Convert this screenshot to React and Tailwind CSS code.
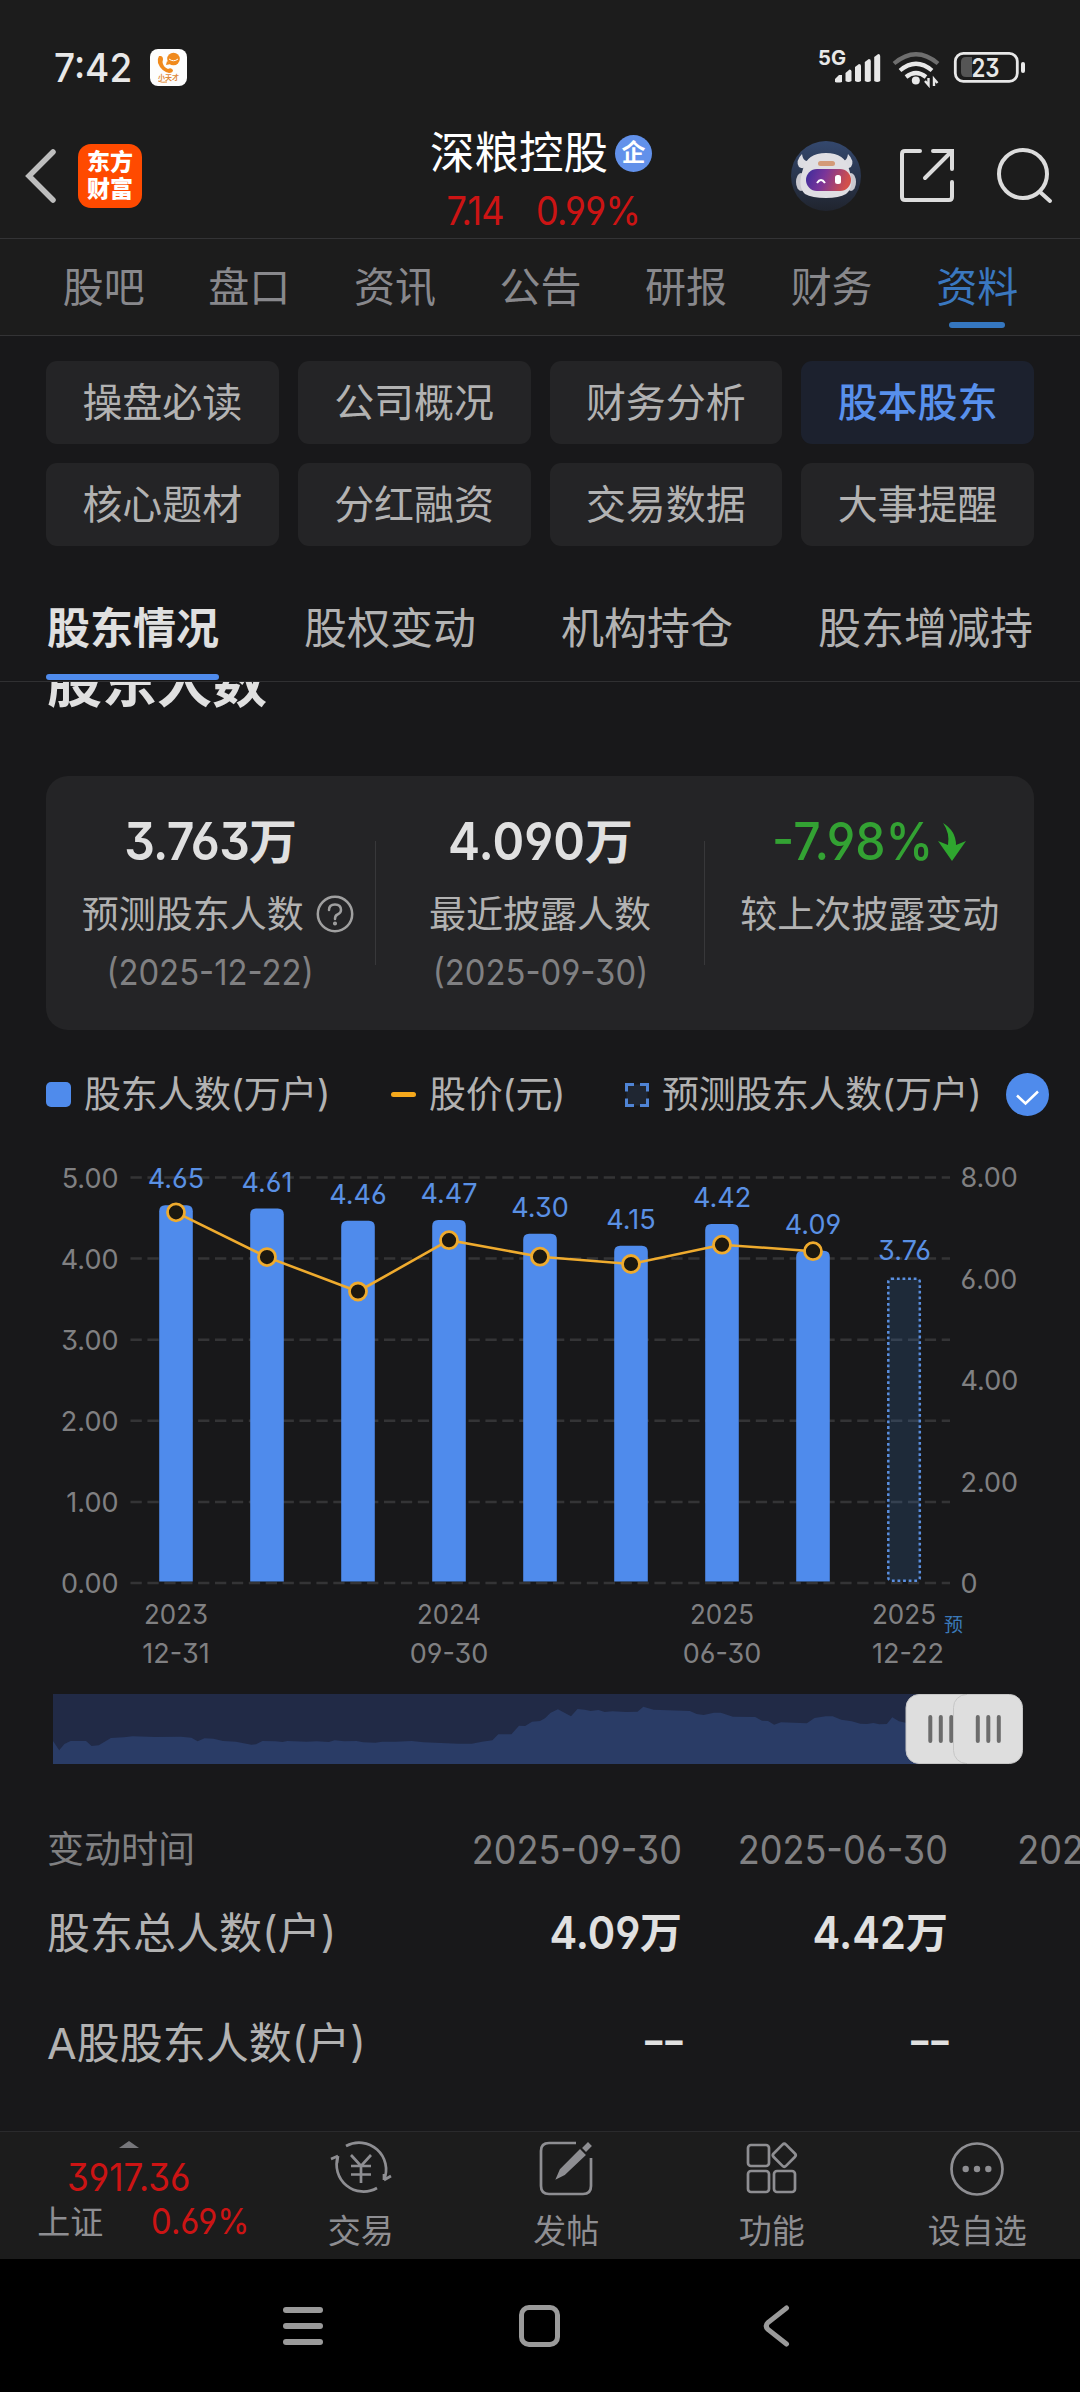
import React from 'react';
import clsx from 'clsx';

const tabs = ['股吧', '盘口', '资讯', '公告', '研报', '财务', '资料'];

const chips = ['操盘必读', '公司概况', '财务分析', '股本股东', '核心题材', '分红融资', '交易数据', '大事提醒'];

const subTabs = ['股东情况', '股权变动', '机构持仓', '股东增减持'];

const holders = [
  { value: 4.65, price: 1212.3, date: ['2023', '12-31'] },
  { value: 4.61, price: 1257.1 },
  { value: 4.46, price: 1291.5 },
  { value: 4.47, price: 1240.2, date: ['2024', '09-30'] },
  { value: 4.3, price: 1256.7 },
  { value: 4.15, price: 1264 },
  { value: 4.42, price: 1244.7, date: ['2025', '06-30'] },
  { value: 4.09, price: 1251.2 },
];

// Condensed digits, the box keeps its natural width
const Num = ({ className, children }) => (
  <span className={clsx('inline-block scale-x-[.925] whitespace-nowrap', className)}>{children}</span>
);

const StatusBar = () => (
  <div className="flex h-[135px] items-center pl-[54px] pr-[54px] text-[#e8e8e8]">
    <Num className="w-[96px] origin-left text-[40px] font-medium leading-none">7:42</Num>
    <svg width="37" height="37" viewBox="0 0 37 37">
      <rect width="37" height="37" rx="8" fill="#fdfdfd" />
      <path d="M9 7 Q7 10 8 14 Q11 22 19 24 Q23 24 23 21 Q21 18 18 20 Q13 18 12.500 13 Q14 8 11 7 Z" fill="#f08a1d" />
      <circle cx="23.500" cy="10" r="6.300" fill="#f08a1d" />
      <path d="M17 12 l-1 4 5 -1 Z" fill="#f08a1d" />
      <path d="M19 10 q4.500 3.500 9 0" fill="none" stroke="#fff" />
      <text x="18.500" y="31" fontSize="7" fontWeight="700" fill="#e08a3a" textAnchor="middle">小天才</text>
      <path d="M8 32 q4 2 9 1" fill="none" stroke="#e08a3a" />
    </svg>
    <svg className="ml-auto" width="210" height="40" viewBox="816 48 210 40">
      <text x="818" y="65" fontSize="20" fontWeight="700" fill="#e8e8e8" textLength="28" lengthAdjust="spacingAndGlyphs">5G</text>
      <g fill="#e8e8e8">
        <path d="M835 79 l4 -4 h3 v7 q-4 1 -7 0 Z" />
        <path d="M845.500 73 l4 -3.500 q2 0 2 2 V81 q-3 2 -6 0 Z" />
        <path d="M855 67 l4 -3 q2 0 2 2 V81 q-3 2 -6 0 Z" />
        <path d="M864.800 62 l4 -3 q2 0 2 2 V81 q-3 2 -6 0 Z" />
        <path d="M874.200 57 l4 -3 q2 0 2 2 V81 q-3 2 -6 0 Z" />
      </g>
      <g fill="none" strokeWidth="4.200">
        <path d="M894 63.500 Q916 45 938 63.500" stroke="#6e6e6e" />
        <path d="M900 70.500 Q916 57 932 70.500" stroke="#e8e8e8" />
        <path d="M906 77 Q916 69 926 77" stroke="#e8e8e8" />
      </g>
      <circle cx="915.800" cy="80.500" r="4" fill="#e8e8e8" />
      <path d="M925 81 l3.500 4 v-7 M934 86 v-7 l3.500 4" fill="none" stroke="#e8e8e8" strokeWidth="2.400" />
      <rect x="955.300" y="53.300" width="62" height="28" rx="8" fill="none" stroke="#e8e8e8" strokeWidth="2.800" />
      <path d="M972 57 h-6 q-5 0 -5 5 v10 q0 5 5 5 h6 Z" fill="#555" />
      <rect x="1021" y="62" width="4" height="11" rx="2" fill="#e8e8e8" />
      <text x="985.500" y="76.800" fontSize="26" fontWeight="600" fill="#e8e8e8" textAnchor="middle" textLength="28" lengthAdjust="spacingAndGlyphs">23</text>
    </svg>
  </div>
);

const Robot = () => (
  <svg width="70" height="70" viewBox="0 0 70 70">
    <defs>
      <linearGradient id="halo" x1="0" y1="0" x2="0" y2="1">
        <stop offset="0" stopColor="#34486e" />
        <stop offset="1" stopColor="#20242e" />
      </linearGradient>
      <linearGradient id="visor" x1="0" y1="0" x2="1" y2="0.200">
        <stop offset="0" stopColor="#3a2c9c" />
        <stop offset="0.450" stopColor="#7a3599" />
        <stop offset="1" stopColor="#d2504a" />
      </linearGradient>
    </defs>
    <circle cx="35" cy="35" r="35" fill="url(#halo)" />
    <path d="M11 13 Q4 20 8 26 Q12 29 18 24 L16 20 Q12 20 11 13 Z M57 13 Q64 20 60 26 Q56 29 50 24 L52 20 Q56 20 57 13 Z" fill="#dcdce2" />
    <ellipse cx="10" cy="41" rx="5" ry="9" fill="#c9c8cf" />
    <ellipse cx="60" cy="41" rx="5" ry="9" fill="#c9c8cf" />
    <path d="M35 12 Q54 12 58 28 Q64 46 55 53 Q48 57 35 57 Q21 57 14 53 Q6 46 12 28 Q16 12 35 12 Z" fill="#dfdee3" />
    <rect x="27" y="20" width="17" height="5" rx="2.500" fill="#d39a78" />
    <rect x="15" y="28" width="45" height="22" rx="11" fill="url(#visor)" />
    <path d="M26 42 Q30 36 34 42" fill="none" stroke="#fff" strokeWidth="2" />
    <rect x="44" y="34" width="6" height="9" rx="2.500" fill="#fff" />
  </svg>
);

const Header = () => (
  <div className="grid h-[104px] grid-cols-[1fr_auto_1fr] border-b border-[#333335]">
    <div className="flex h-[81px] items-center pl-[24px]">
      <svg width="32" height="54" viewBox="0 0 32 54" fill="none" stroke="#bdbdbd" strokeWidth="5.500">
        <path d="M29 3 L5 27 L29 51" strokeLinecap="round" />
      </svg>
      <div className="ml-[22px] flex h-[64px] w-[64px] flex-col items-center justify-center rounded-[13px] bg-[#ff4a00] text-[23px] font-black leading-[27px] text-white">
        <span>东方</span>
        <span>财富</span>
      </div>
    </div>
    <div className="flex flex-col items-center">
      <div className="flex h-[36px] items-center gap-[7px] pl-[2px]">
        <span className="text-[44.500px] leading-none text-white">深粮控股</span>
        <span className="flex h-[37px] w-[37px] items-center justify-center rounded-full bg-[#6291ea] text-[24px] font-bold leading-none text-white">企</span>
      </div>
      <div className="mt-[14px] flex h-[50px] items-center gap-[33px] pl-[11px] text-[39px] leading-none text-[#cc1414]">
        <Num className="origin-right tracking-[-0.030em]">7.14</Num>
        <Num className="origin-left tracking-[-0.020em]">0.99%</Num>
      </div>
    </div>
    <div className="flex h-[81px] items-center justify-end pr-[27px]">
      <Robot />
      <svg className="ml-[38px]" width="56" height="56" viewBox="0 0 56 56" fill="none" stroke="#dcdcdc" strokeWidth="4" strokeLinecap="round">
        <path d="M21 3 H6 Q3 3 3 6 V49 Q3 52 6 52 H50 Q53 52 53 49 V34 M34 3 H53 V21 M52 4 L26 30" />
      </svg>
      <svg className="ml-[40px]" width="58" height="58" viewBox="0 0 58 58" fill="none" stroke="#dcdcdc" strokeWidth="4" strokeLinecap="round">
        <circle cx="28" cy="27" r="24" />
        <path d="M45 45 L55 54" />
      </svg>
    </div>
  </div>
);

const Tabs = () => (
  <div className="grid h-[97px] grid-cols-7 border-b border-[#333335] pl-[31px] pr-[30px]">
    {tabs.map((tab) => {
      const active = tab === '资料';
      return (
        <div key={tab} className="flex flex-col items-center">
          <span className={clsx('mt-[27px] text-[41px] leading-[42px]', active ? 'text-[#3a78c0]' : 'text-[#88888c]')}>{tab}</span>
          {active && <span className="mt-[14px] h-[6px] w-[56px] rounded-full bg-[#3577c0]" />}
        </div>
      );
    })}
  </div>
);

const Chips = () => (
  <div className="mt-[25px] grid grid-cols-4 gap-[19px] px-[46px]">
    {chips.map((chip) => (
      <div
        key={chip}
        className={clsx(
          'flex h-[83px] items-center justify-center rounded-[11px] text-[40px] leading-none',
          chip === '股本股东' ? 'bg-[#1c212e] font-medium text-[#5890ec]' : 'bg-[#242426] text-[#b2b2b2]'
        )}
      >
        {chip}
      </div>
    ))}
  </div>
);

const SubTabs = () => (
  <div className="mt-[59px] flex h-[77px] gap-[84px] border-b border-[#303032] px-[46px]">
    {subTabs.map((tab, i) => (
      <div key={tab} className="flex flex-col">
        <span className={clsx('pl-[1px] text-[43px] leading-[46px]', i === 0 ? 'font-semibold text-[#e0e0e0]' : 'text-[#b2b2b2]')}>{tab}</span>
        {i === 0 && <span className="mt-[23px] h-[6px] rounded-full bg-[#4f8bec]" />}
      </div>
    ))}
  </div>
);

const Stats = () => (
  <div className="mx-[46px] flex h-[254px] rounded-[22px] bg-[#242426]">
    <div className="flex flex-1 flex-col items-center pt-[36px]">
      <div className="flex h-[60px] items-center text-[48px] font-semibold leading-none text-[#e0e0e0]">
        <Num className="-ml-[10px] origin-right text-[52px] tracking-[-0.015em]">3.763</Num>万
      </div>
      <div className="ml-[15px] mt-[17px] flex h-[50px] items-center gap-[12px] text-[37px] leading-none text-[#b2b2b2]">
        预测股东人数
        <svg width="38" height="38" viewBox="0 0 38 38" fill="none" stroke="#a0a0a0" strokeWidth="2.500">
          <circle cx="19" cy="19" r="17.200" />
          <path d="M13 15 Q13 9.500 19 9.500 Q25 9.500 25 15 Q25 18 21.500 19.500 Q19 20.500 19 24" strokeLinecap="round" />
          <circle cx="19" cy="28.500" r="0.800" fill="#a0a0a0" />
        </svg>
      </div>
      <Num className="mt-[9px] text-[35.500px] leading-[50px] text-[#808082]">(2025-12-22)</Num>
    </div>
    <div className="mt-[65px] h-[124px] w-px bg-[#38383a]" />
    <div className="flex flex-1 flex-col items-center pt-[36px]">
      <div className="flex h-[60px] items-center text-[48px] font-semibold leading-none text-[#e0e0e0]">
        <Num className="-ml-[10px] origin-right text-[52px]">4.090</Num>万
      </div>
      <div className="mt-[17px] flex h-[50px] items-center text-[37px] leading-none text-[#b2b2b2]">最近披露人数</div>
      <Num className="mt-[9px] text-[35.500px] leading-[50px] text-[#808082]">(2025-09-30)</Num>
    </div>
    <div className="mt-[65px] h-[124px] w-px bg-[#38383a]" />
    <div className="flex flex-1 flex-col items-center pt-[36px]">
      <div className="flex h-[60px] items-center text-[#33a233]">
        <Num className="-ml-[14px] origin-right text-[52px] font-medium leading-none">-7.98%</Num>
        <svg className="ml-[5px]" width="28" height="38" viewBox="0 0 28 38">
          <path d="M5 0 Q18 8 18 22 L28 18 L14 38 L0 18 L10 22 Q12 10 5 0 Z" fill="#2fa62f" />
        </svg>
      </div>
      <div className="mt-[17px] flex h-[50px] items-center text-[37px] leading-none text-[#b2b2b2]">较上次披露变动</div>
    </div>
  </div>
);

const Legend = () => (
  <div className="mt-[43px] flex h-[43px] items-center pl-[46px] text-[37px] leading-none tracking-[-0.010em] text-[#b2b2b2]">
    <div className="flex w-[345px] items-center gap-[13px]">
      <span className="h-[25px] w-[25px] rounded-[5px] bg-[#4f8bec]" />
      <span>股东人数(万户)</span>
    </div>
    <div className="flex w-[234px] items-center gap-[13px]">
      <span className="h-[5px] w-[25px] rounded-full bg-[#f5a81c]" />
      <span>股价(元)</span>
    </div>
    <div className="flex w-[381px] items-center gap-[13px]">
      <svg width="24" height="24" viewBox="0 0 24 24">
        <rect x="1.500" y="1.500" width="21" height="21" fill="#1f2632" />
        <path d="M1.500 8.500 V1.500 H9 M15 1.500 H22.500 V8.500 M22.500 15.500 V22.500 H15 M9 22.500 H1.500 V15.500" fill="none" stroke="#4f84d6" strokeWidth="3" />
      </svg>
      <span>预测股东人数(万户)</span>
    </div>
    <svg width="43" height="43" viewBox="0 0 43 43">
      <circle cx="21.500" cy="21.500" r="21.500" fill="#4f8bec" />
      <path d="M11 22.500 L19.500 30.500 L32 18.500" fill="none" stroke="#fff" strokeWidth="2.500" />
    </svg>
  </div>
);

const barX = (i) => 176 + i * 91;
const barTop = (value) => 1582 - value * 81;

const Chart = () => (
  <svg className="block" width="1080" height="556" viewBox="0 1116 1080 556" fontSize="27">
    {[5, 4, 3, 2, 1, 0].map((n) => (
      <g key={n}>
        <path d={`M130.500 ${1583 - n * 81.100} H950`} stroke="#343436" strokeWidth="2.500" strokeDasharray="11.300 5.600" />
        <text x="118.500" y={1593 - n * 81.100} fill="#808082" textAnchor="end">{n.toFixed(2)}</text>
      </g>
    ))}
    {['0', '2.00', '4.00', '6.00', '8.00'].map((label, n) => (
      <text key={label} x="960.500" y={1593 - n * 101.400} fill="#808082">{label}</text>
    ))}
    {holders.map(({ value }, i) => {
      const x = barX(i) - 16.8;
      const top = barTop(value);
      return (
        <g key={i}>
          <path d={`M${x} 1581.500 V${top + 6} q0 -6 6 -6 h21.600 q6 0 6 6 V1581.500 Z`} fill="#4f8bec" />
          <text x={barX(i)} y={top - 17} fill="#5a90e4" textAnchor="middle">{value.toFixed(2)}</text>
        </g>
      );
    })}
    <rect x="888.300" y="1278.700" width="31.500" height="302" rx="3" fill="#3f8be0" fillOpacity="0.160" />
    <rect x="888.300" y="1278.700" width="31.500" height="302" rx="3" fill="none" stroke="#5a8fe0" strokeWidth="2.500" strokeDasharray="2.800 2.800" />
    <text x="904.500" y="1260" fill="#5a90e4" textAnchor="middle">3.76</text>
    <polyline
      points={holders.map(({ price }, i) => `${barX(i)},${price}`).join(' ')}
      fill="none"
      stroke="#efab2e"
      strokeWidth="2.600"
    />
    {holders.map(({ price }, i) => (
      <circle key={i} cx={barX(i)} cy={price} r="8.500" fill="#1c1810" stroke="#efab2e" strokeWidth="2.800" />
    ))}
    <g fill="#808082" textAnchor="middle">
      {holders.map(({ date }, i) => date && (
        <g key={i}>
          <text x={barX(i)} y="1624" textLength="64" lengthAdjust="spacingAndGlyphs">{date[0]}</text>
          <text x={barX(i)} y="1663">{date[1]}</text>
        </g>
      ))}
      <text x="904" y="1624" textLength="64" lengthAdjust="spacingAndGlyphs">2025</text>
      <text x="908" y="1663">12-22</text>
    </g>
    <text x="944" y="1631.500" fontSize="19" fill="#3a78b8">预</text>
  </svg>
);

const RangeSlider = () => (
  <svg className="ml-[53px] mt-[22px] block" width="970" height="70" viewBox="0 0 970 70">
    <rect width="880" height="70" fill="#212a46" />
    <path
      d="M0 70 V47 L6.200 56.300 L11.400 50 L17.600 47 H33 L38.600 52 L45.800 51.300 L57.900 44 L71 43.300 L79.600 42.300 L102 43 L127.800 42.700 L138.400 43.700 L144.600 47.300 L151.500 44.300 L160.500 44.700 L170 47 L182.900 47.700 L198.400 50.700 L203 50.300 L209.400 47 L222.500 47.300 L229.400 48 L234.500 47 L253.500 47.700 L263.800 47.300 L275.900 48 L281.700 46.300 L291.400 47.300 L303.400 47 L310.300 48.300 L322.300 48.700 L329.200 47.700 H343 L358.500 47 L370.600 48.300 L405 49.700 L418.800 49.700 L429 47.700 L439.400 46.300 L445.300 40.300 H458.400 L466 31.700 L472.200 32 L479 27.700 L487 27 L492 24.300 L497.300 19 L504.900 15.300 L518 22.300 L524.500 15 L531.800 15.700 L537.600 17 L545.500 16 L551.700 18 L559.300 17.300 L573 18 L584.500 17.700 L590.300 12.700 L600.600 15.700 L636.800 17 L643.700 20 L650.600 21 L661 18.700 H667.800 L679.900 22.700 L702.200 23 L709 26.700 L715 27 L721.200 30.700 L728 28.300 L753.900 29.300 L761.500 24 L772.800 22.300 H779.700 L788.300 25.700 L798.700 27.300 L807.300 29.700 L814 30 L820.400 29 L826.200 30.300 L833.800 30 L839.300 23.300 L845.900 27.300 L852.700 28.700 H880 V70 Z"
      fill="#2a3c66"
    />
    {[853, 900.5].map((x) => (
      <g key={x}>
        <rect x={x} y="0.500" width="69" height="69" rx="13" fill="#dedede" stroke="#c6c6c6" />
        <path d={`M${x + 24.3} 23 v24 M${x + 34.8} 23 v24 M${x + 45.3} 23 v24`} stroke="#6c6c6c" strokeWidth="4" strokeLinecap="round" />
      </g>
    ))}
  </svg>
);

const Table = () => (
  <div className="grid w-[1221px] grid-cols-[369px_266px_266px_273px] pl-[47px] pt-[57px]">
    <span className="h-[58px] text-[37px] leading-[58px] text-[#808082]">变动时间</span>
    <Num className="origin-right text-right text-[39px] leading-[58px] text-[#808082]">2025-09-30</Num>
    <Num className="origin-right text-right text-[39px] leading-[58px] text-[#808082]">2025-06-30</Num>
    <Num className="origin-right text-right text-[39px] leading-[58px] text-[#808082]">2025-03-31</Num>

    <span className="mt-[24px] text-[43px] leading-[60px] text-[#b2b2b2]">股东总人数(户)</span>
    <div className="mt-[24px] flex items-center justify-end text-[42px] font-semibold leading-[60px] text-[#e0e0e0]">
      <Num className="origin-right text-[45px]">4.09</Num>万
    </div>
    <div className="mt-[24px] flex items-center justify-end text-[42px] font-semibold leading-[60px] text-[#e0e0e0]">
      <Num className="origin-right text-[45px]">4.42</Num>万
    </div>
    <span />

    <span className="mt-[50px] text-[43px] leading-[60px] text-[#b2b2b2]">A股股东人数(户)</span>
    <div className="mt-[50px] origin-right scale-x-125 text-right text-[42px] font-semibold leading-[60px] tracking-[-0.080em] text-[#e0e0e0]">--</div>
    <div className="mt-[50px] origin-right scale-x-125 text-right text-[42px] font-semibold leading-[60px] tracking-[-0.080em] text-[#e0e0e0]">--</div>
    <span />
  </div>
);

const actions = [
  {
    label: '交易',
    icon: (
      <>
        <path d="M16 8 A27 27 0 0 1 54 42 M54 42 l7 -4 M54 42 v-6 M47 50 A27 27 0 0 1 8 18 M8 18 l-7 3 M8 18 l-1 7" />
        <path d="M21 17 L31 28 L41 17 M21 28 H41 M21 36.500 H41 M31 28 V45" />
      </>
    ),
  },
  {
    label: '发帖',
    icon: (
      <>
        <path d="M41 5 H14 Q6 5 6 13 V48 Q6 56 14 56 H48 Q56 56 56 48 V20" />
        <path d="M23 39 L26 32 L45 13 L49 17 L29 36 Z M49 10 L53 6 L55 8 L51 12 Z" fill="#8e8e92" />
      </>
    ),
  },
  {
    label: '功能',
    icon: (
      <>
        <rect x="7" y="7" width="21" height="21" rx="3" />
        <rect x="7" y="33" width="21" height="21" rx="3" />
        <rect x="33" y="33" width="21" height="21" rx="3" />
        <rect x="34.500" y="8.500" width="17.500" height="17.500" rx="2.500" transform="rotate(45 43.250 17.250)" />
      </>
    ),
  },
  {
    label: '设自选',
    icon: (
      <>
        <circle cx="31" cy="31" r="25.500" />
        <g fill="#8e8e92" stroke="none">
          <circle cx="19.700" cy="31" r="3.200" />
          <circle cx="31" cy="31" r="3.200" />
          <circle cx="42.300" cy="31" r="3.200" />
        </g>
      </>
    ),
  },
];

const BottomBar = () => (
  <div className="flex h-[128px] border-t border-[#2a2a2c] bg-[#1c1c1c] text-[#8e8e92]">
    <div className="flex w-[258px] flex-col items-center">
      <svg className="mt-[9px]" width="20" height="7" viewBox="0 0 20 7">
        <path d="M0 7 L10 0 L20 7 Z" fill="#77777b" />
      </svg>
      <Num className="mt-[8px] text-[38px] leading-[42px] text-[#cc1414]">3917.36</Num>
      <div className="flex items-center pl-[33px] leading-[48px]">
        <span className="text-[33px]">上证</span>
        <Num className="ml-[44px] text-[35.500px] text-[#cc1414]">0.69%</Num>
      </div>
    </div>
    {actions.map(({ label, icon }) => (
      <div key={label} className="flex flex-1 flex-col items-center">
        <svg className="mt-[6px]" width="62" height="62" viewBox="0 0 62 62" fill="none" stroke="#8e8e92" strokeWidth="2.700">
          {icon}
        </svg>
        <span className="mt-[10px] text-[33px] leading-[42px]">{label}</span>
      </div>
    ))}
  </div>
);

const NavBar = () => (
  <div className="flex h-[133px] items-center bg-black pl-[283px]">
    <div className="flex w-[40px] flex-col gap-[10px]">
      <span className="h-[6px] rounded-full bg-[#9a9a9a]" />
      <span className="h-[6px] rounded-full bg-[#9a9a9a]" />
      <span className="h-[6px] rounded-full bg-[#9a9a9a]" />
    </div>
    <div className="ml-[196px] h-[42px] w-[41px] rounded-[10px] border-[5px] border-[#9a9a9a]" />
    <svg className="ml-[203px]" width="27" height="42" viewBox="0 0 27 42" fill="none" stroke="#9a9a9a" strokeWidth="5">
      <path d="M23.500 3 L5 17.500 Q1.500 21 5 24.500 L23.500 39" strokeLinecap="round" />
    </svg>
  </div>
);

const App = () => (
  <div className="flex h-[2392px] w-[1080px] flex-col overflow-hidden bg-[#18181a] font-['Inter','Noto_Sans_CJK_SC',sans-serif] [font-feature-settings:'case','cv03','cv04','cv09']">
    <div className="bg-[#1c1c1c]">
      <StatusBar />
      <Header />
      <Tabs />
    </div>
    <Chips />
    <SubTabs />
    <div className="h-[94px] overflow-hidden px-[47px]">
      <h2 className="-mt-[28px] text-[55px] font-bold leading-[56px] text-[#e0e0e0]">股东人数</h2>
    </div>
    <Stats />
    <Legend />
    <Chart />
    <RangeSlider />
    <div className="flex-1 overflow-hidden">
      <Table />
    </div>
    <BottomBar />
    <NavBar />
  </div>
);

export default App;
